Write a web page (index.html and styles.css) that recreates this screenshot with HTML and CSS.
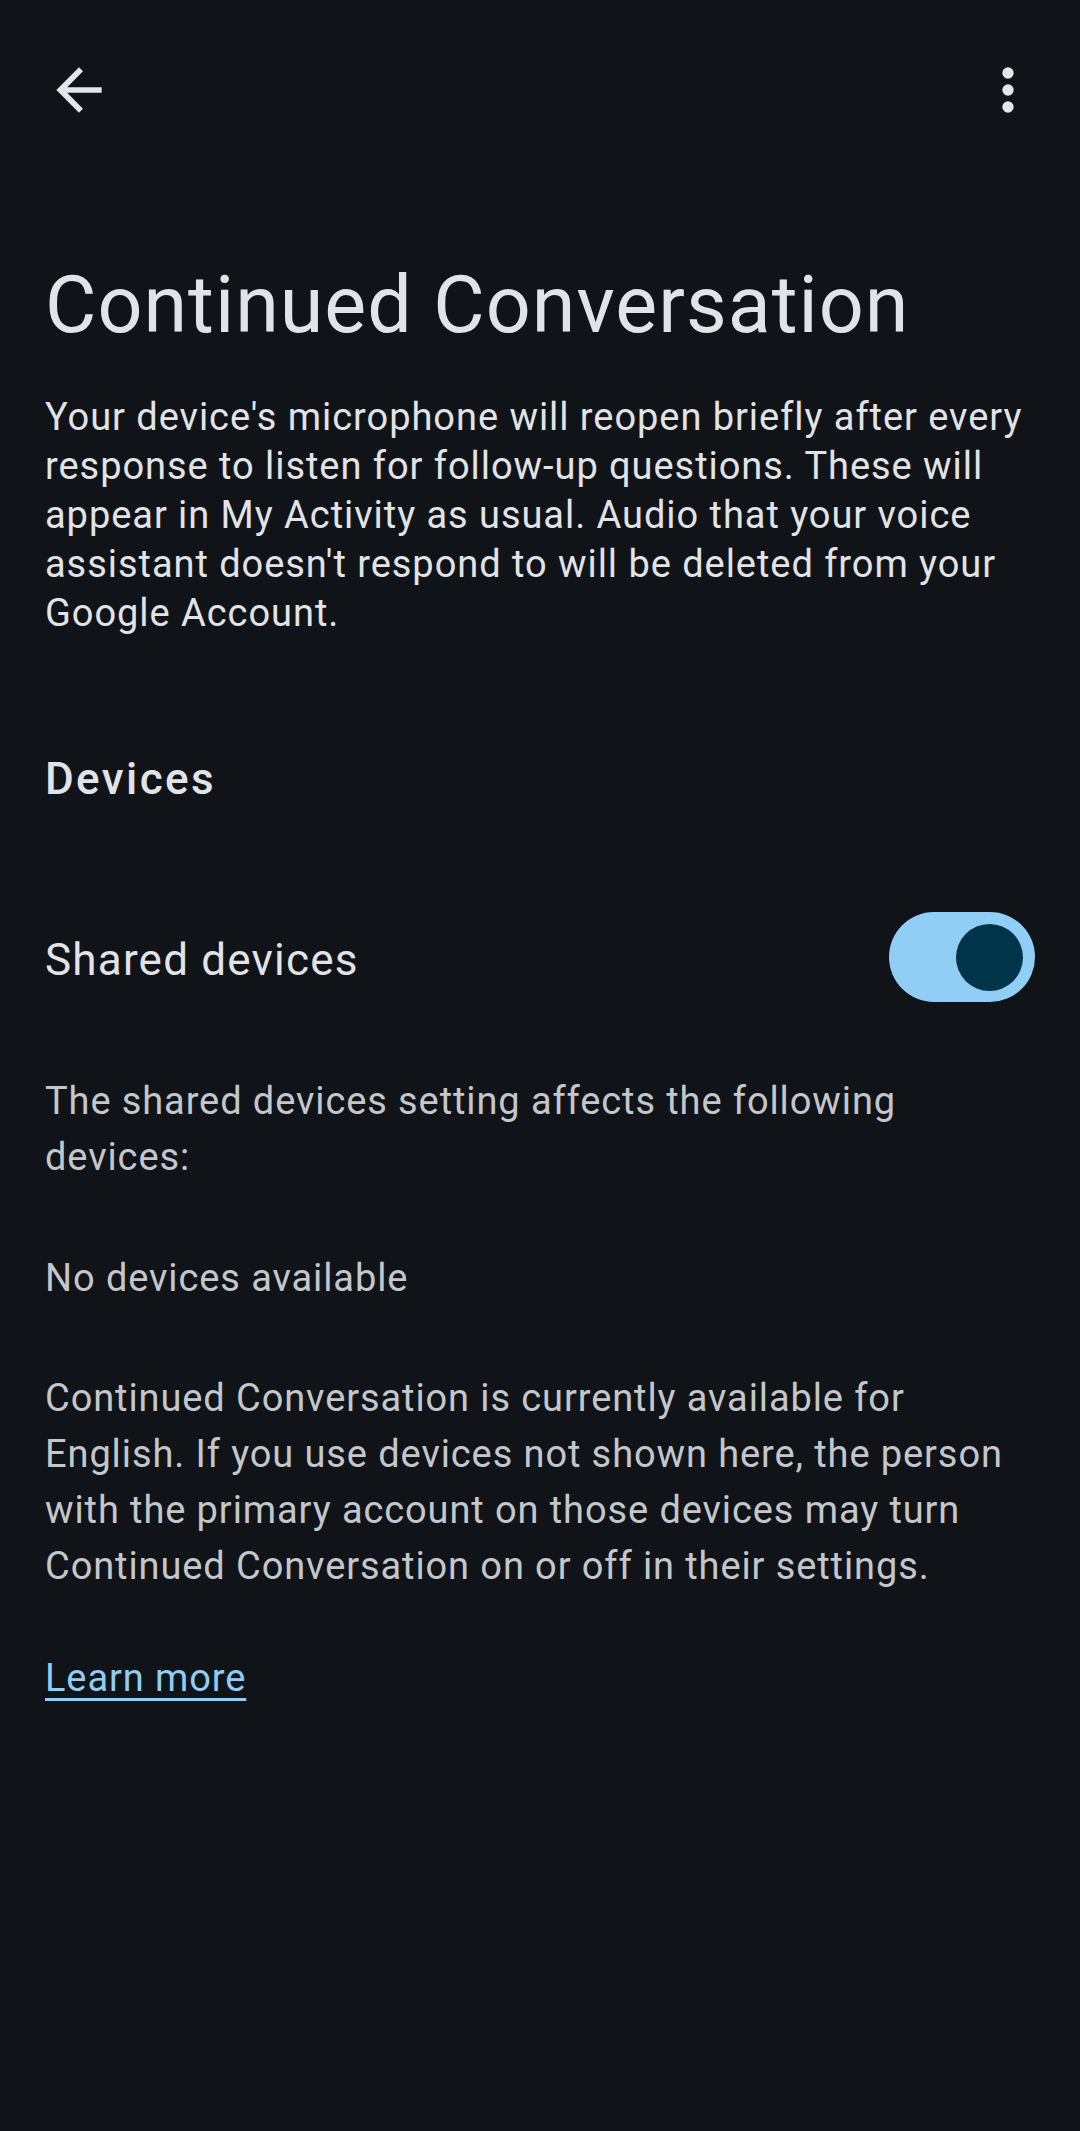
FILE: index.html
```html
<!DOCTYPE html>
<html lang="en">
<head>
<meta charset="utf-8">
<title>Continued Conversation</title>
<link rel="stylesheet" href="styles.css">
</head>
<body>
<div class="screen">
  <header class="topbar">
    <svg class="icon" viewBox="0 0 24 24" aria-label="Back"><path d="M20 11H7.83l5.59-5.59L12 4l-8 8 8 8 1.41-1.41L7.83 13H20v-2z"/></svg>
    <svg class="icon" viewBox="0 0 24 24" aria-label="More options"><circle cx="12" cy="6" r="2"/><circle cx="12" cy="12" r="2"/><circle cx="12" cy="18" r="2"/></svg>
  </header>
  <main class="content">
    <h1 class="title">Continued Conversation</h1>
    <p class="intro">Your device's microphone will reopen briefly after every response to listen for follow-up questions. These will appear in My Activity as usual. Audio that your voice assistant doesn't respond to will be deleted from your Google Account.</p>
    <h2 class="section">Devices</h2>
    <div class="row">
      <span class="row-label">Shared devices</span>
      <span class="switch"><span class="thumb"></span></span>
    </div>
    <p class="note affects">The shared devices setting affects the following devices:</p>
    <p class="note none">No devices available</p>
    <p class="note info">Continued Conversation is currently available for English. If you use devices not shown here, the person with the primary account on those devices may turn Continued Conversation on or off in their settings.</p>
    <a class="link" href="#">Learn more</a>
  </main>
</div>
</body>
</html>
```

FILE: styles.css
```css
html, body {
  margin: 0;
  padding: 0;
  background: #101418;
}
body {
  font-family: Roboto, "Noto Sans", sans-serif;
  color: #e1e3e6;
}
.screen {
  width: 1080px;
  min-height: 2131px;
  background: #101418;
}
.topbar {
  height: 180px;
  display: flex;
  align-items: center;
  justify-content: space-between;
  padding: 0 38px 0 45px;
}
.icon {
  width: 68px;
  height: 68px;
  fill: #e4e6e9;
  display: block;
}
.content {
  padding: 0 45px 0 45px;
  display: flex;
  flex-direction: column;
  align-items: flex-start;
}
.title {
  margin: 77px 0 0 0;
  font-size: 79px;
  line-height: 96px;
  font-weight: 400;
  letter-spacing: 1px;
  color: #e1e3e6;
}
.intro {
  margin: 40px 0 0 0;
  font-size: 38px;
  line-height: 49px;
  letter-spacing: 0.95px;
  color: #e1e3e6;
}
.section {
  margin: 113px 0 0 0;
  font-size: 44px;
  line-height: 56px;
  font-weight: 500;
  letter-spacing: 2.4px;
  color: #e1e3e6;
}
.row {
  margin-top: 105px;
  align-self: stretch;
  display: flex;
  align-items: center;
  justify-content: space-between;
  height: 90px;
}
.row-label {
  font-size: 44px;
  line-height: 56px;
  letter-spacing: 1.2px;
  padding-top: 6px;
  color: #e1e3e6;
}
.switch {
  width: 146px;
  height: 90px;
  border-radius: 45px;
  background: #90cef5;
  display: flex;
  align-items: center;
  justify-content: flex-end;
  padding-right: 12px;
  box-sizing: border-box;
}
.thumb {
  width: 67px;
  height: 67px;
  border-radius: 50%;
  background: #003549;
}
.note {
  font-size: 38px;
  line-height: 56px;
  letter-spacing: 0.9px;
  color: #c3c7cb;
  margin: 0;
}
.affects { margin-top: 71px; }
.none { margin-top: 65px; }
.info { margin-top: 64px; }
.link {
  margin-top: 56px;
  font-size: 38px;
  line-height: 56px;
  letter-spacing: 0.9px;
  color: #8fcdf4;
  text-decoration: underline;
  text-decoration-thickness: 3px;
  text-underline-offset: 7px;
}
```
